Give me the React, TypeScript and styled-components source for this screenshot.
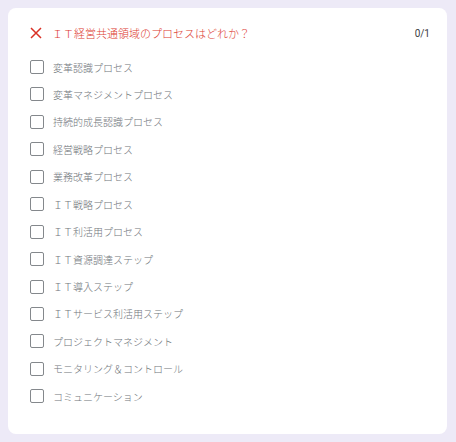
import React from "react";
import styled, { createGlobalStyle } from "styled-components";

const GlobalStyle = createGlobalStyle`
  html, body {
    margin: 0;
    padding: 0;
    background: #edeaf7;
  }
  body {
    font-family: "Noto Sans CJK JP", "Noto Sans", Roboto, sans-serif;
  }
`;

const Page = styled.div`
  padding: 8px 9px 8px 8px;
`;

const Card = styled.div`
  background: #ffffff;
  border-radius: 8px;
  height: 426px;
  box-sizing: border-box;
  padding: 18px 17px 0 21px;
`;

const Header = styled.div`
  display: flex;
  align-items: center;
  height: 14px;
`;

const Cross = styled.svg`
  width: 14px;
  height: 14px;
  margin-right: 9px;
  flex-shrink: 0;
`;

const Title = styled.div`
  flex: 1;
  color: #dd3b30;
  font-size: 11px;
  font-weight: 300;
`;

const Score = styled.div`
  color: #3c4043;
  font-size: 10px;
  font-family: Roboto, "Noto Sans", sans-serif;
`;

const Options = styled.div`
  display: flex;
  flex-direction: column;
  gap: 13.45px;
  margin-top: 20px;
`;

const Option = styled.label`
  display: flex;
  align-items: center;
  height: 14px;
  padding-left: 1px;
`;

const Box = styled.span`
  width: 14px;
  height: 14px;
  box-sizing: border-box;
  border: 1.6px solid #84888c;
  border-radius: 2px;
  margin-right: 9px;
  flex-shrink: 0;
`;

const Label = styled.span`
  color: #70757a;
  font-size: 10px;
  font-weight: 300;
`;

const options = [
  "変革認識プロセス",
  "変革マネジメントプロセス",
  "持続的成長認識プロセス",
  "経営戦略プロセス",
  "業務改革プロセス",
  "ＩＴ戦略プロセス",
  "ＩＴ利活用プロセス",
  "ＩＴ資源調達ステップ",
  "ＩＴ導入ステップ",
  "ＩＴサービス利活用ステップ",
  "プロジェクトマネジメント",
  "モニタリング＆コントロール",
  "コミュニケーション",
];

export default function App() {
  return (
    <>
      <GlobalStyle />
      <Page>
        <Card>
          <Header>
            <Cross viewBox="0 0 14 14">
              <path d="M2 2 L12 12 M12 2 L2 12" stroke="#d93025" strokeWidth="1.5" fill="none" />
            </Cross>
            <Title>ＩＴ経営共通領域のプロセスはどれか？</Title>
            <Score>0/1</Score>
          </Header>
          <Options>
            {options.map((o) => (
              <Option key={o}>
                <Box />
                <Label>{o}</Label>
              </Option>
            ))}
          </Options>
        </Card>
      </Page>
    </>
  );
}
